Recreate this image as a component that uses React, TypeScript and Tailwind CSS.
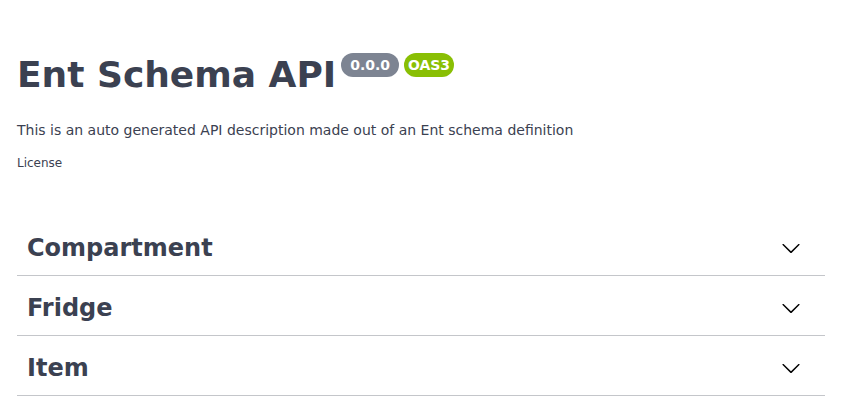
import React from "react";

const tags = ["Compartment", "Fridge", "Item"];

function Chevron() {
  return (
    <svg width="20" height="20" viewBox="0 0 20 20" className="fill-[#000]">
      <path d="M17.418 6.109c.272-.268.709-.268.979 0s.271.701 0 .969l-7.908 7.83c-.27.268-.707.268-.979 0l-7.908-7.83c-.27-.268-.27-.701 0-.969.271-.268.709-.268.979 0L10 13.25l7.418-7.141z" />
    </svg>
  );
}

export default function App() {
  return (
    <div
      className="min-h-screen bg-white pl-[17px] pr-[19px] text-[#3b4151]"
      style={{ fontFamily: "'DejaVu Sans', sans-serif" }}
    >
      {/* Info */}
      <div className="pt-[53px]">
        <div className="flex items-start">
          <h2 className="mt-[1px] text-[36px] font-bold leading-[42px]">Ent Schema API</h2>
          <span className="ml-[5px] flex h-6 items-center rounded-full bg-[#7d8492] px-1 text-[14px] font-bold whitespace-pre text-white">
            {" 0.0.0 "}
          </span>
          <span className="ml-[5px] flex h-6 items-center rounded-full bg-[#89bf04] px-1 text-[14px] font-bold text-white">
            OAS3
          </span>
        </div>
        <p className="mt-[26px] text-[14px] leading-[16px]">
          This is an auto generated API description made out of an Ent schema definition
        </p>
        <div className="mt-[18px] text-[12px] leading-[14px]">License</div>
      </div>

      {/* Tags */}
      <div className="mt-[46px]">
        {tags.map((t) => (
          <div
            key={t}
            className="flex items-center justify-between border-b border-[rgba(59,65,81,0.3)] pt-[18px] pr-[24px] pb-[13px] pl-[10px]"
          >
            <h3 className="text-[24px] font-bold leading-[28px]">{t}</h3>
            <Chevron />
          </div>
        ))}
      </div>
    </div>
  );
}
